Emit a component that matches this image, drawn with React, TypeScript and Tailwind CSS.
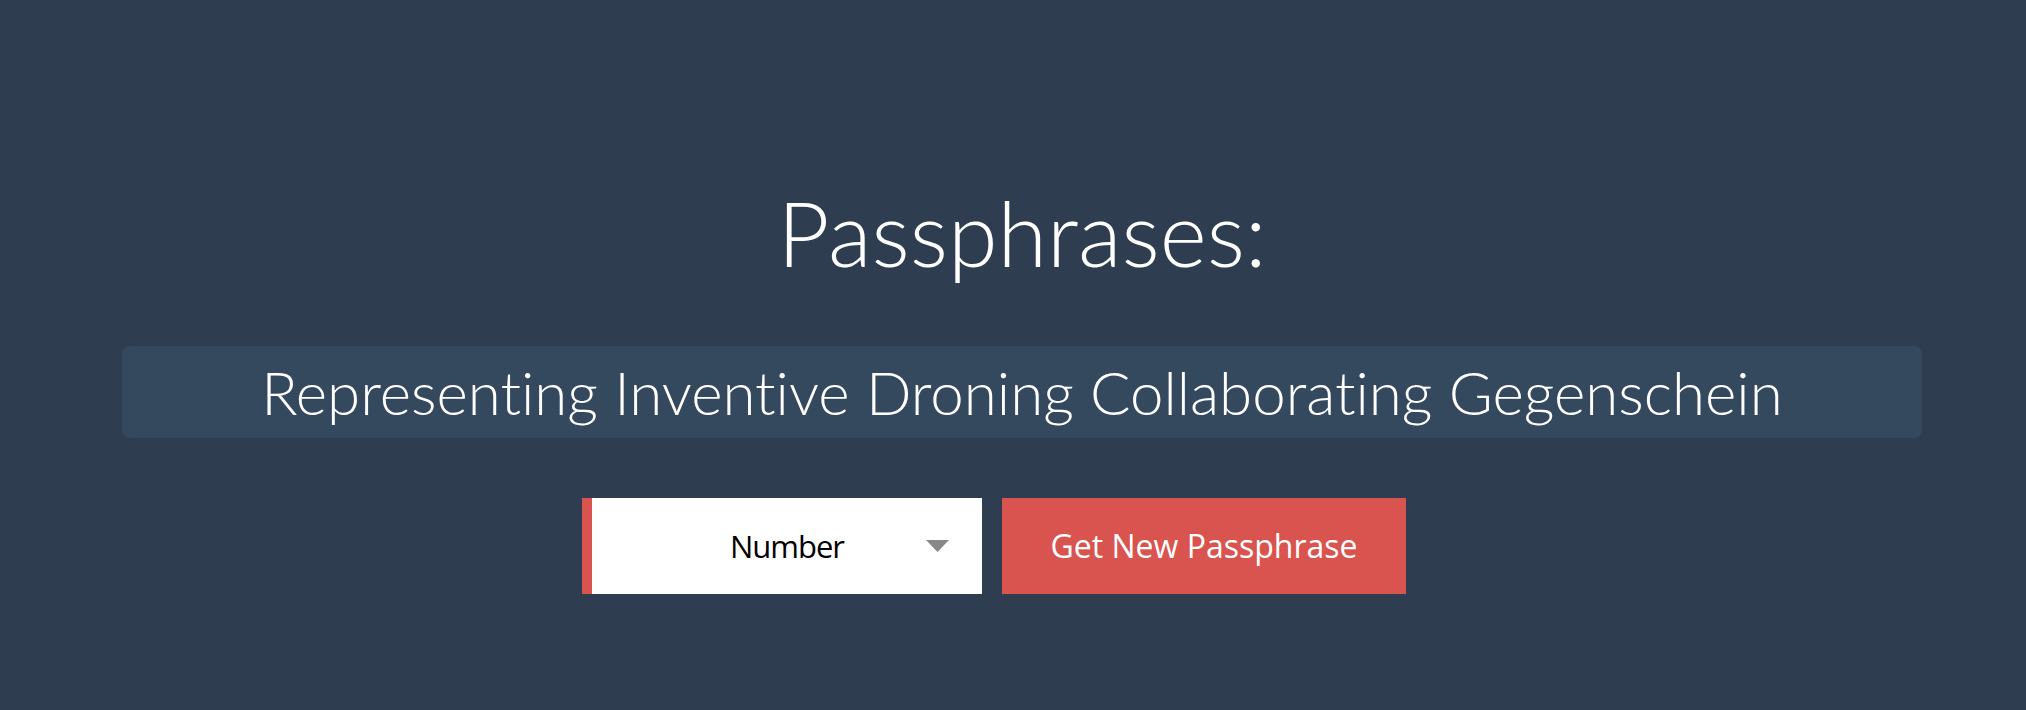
import React, { useState } from 'react'

const words = ['Representing', 'Inventive', 'Droning', 'Collaborating', 'Gegenschein']

export default function App() {
  const [mode, setMode] = useState('Number')

  return (
    <div className="min-h-[710px] w-full bg-[#2e3d50] pl-[122px] pr-[104px] pt-[177px] font-['Lato',sans-serif] [font-variant-ligatures:none]">
      <h1 className="text-center text-[90px] font-light leading-[110px] text-white">Passphrases:</h1>

      <div className="mt-[59px] flex h-[92px] items-center justify-center rounded-lg bg-[#34485e]">
        <p className="text-[60px] font-light text-white">{words.join(' ')}</p>
      </div>

      <div className="mt-[60px] flex justify-center gap-[20px] pr-[56px] font-['Open_Sans',sans-serif]">
        <div className="relative h-[96px] w-[400px] border-l-[10px] border-[#d9534f] bg-white">
          <select
            value={mode}
            onChange={e => setMode(e.target.value)}
            className="h-full w-full appearance-none bg-transparent text-center text-[31px] tracking-[-1px] text-black outline-none"
          >
            <option>Number</option>
            <option>Symbol</option>
            <option>None</option>
          </select>
          <svg className="pointer-events-none absolute right-[33px] top-[42px]" width="23" height="12" viewBox="0 0 23 12">
            <path d="M0 0h23L11.5 12z" fill="#888888" />
          </svg>
        </div>
        <button className="h-[96px] w-[404px] bg-[#d9534f] text-[32px] text-white">Get New Passphrase</button>
      </div>
    </div>
  )
}
